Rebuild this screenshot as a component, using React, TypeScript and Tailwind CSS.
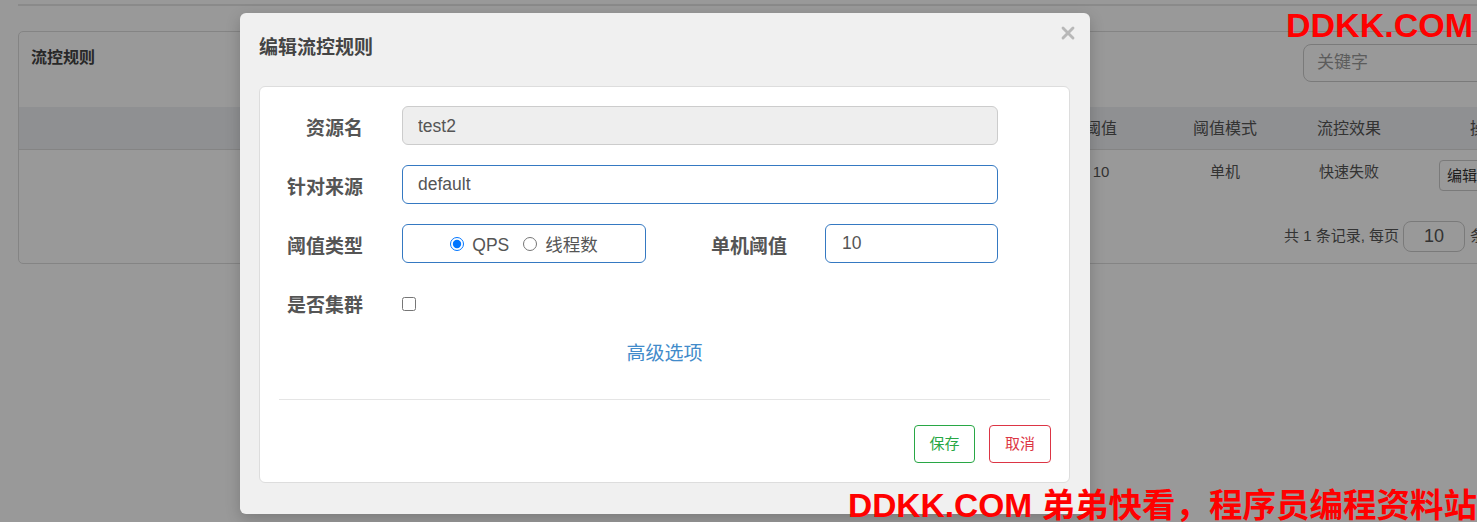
import { X } from 'lucide-react';

const font = "font-['Liberation_Sans','Noto_Sans_CJK_SC',sans-serif]";

function FormLabel({ text, className = '' }: { text: string; className?: string }) {
    return (
        <label className={`mt-[6px] text-right text-[19px] font-bold text-[#555] leading-[39px] ${className}`}>
            {text}
        </label>
    );
}

export default function App() {
    return (
        <div className={`relative h-[522px] w-[1477px] overflow-hidden bg-white ${font}`}>
            {/* page behind the dialog */}
            <div className="pl-[18px] pt-[4px]">
                <div className="h-[2px] w-[1540px] bg-[#e6e6e6]" />
                <div className="mt-[25px] w-[1544px] rounded-[5px] border border-[#dddddd]">
                    <div className="flex h-[75px] items-start">
                        <h3 className="pl-[12px] pt-[15px] text-[16px] font-bold leading-[22px] text-[#444]">流控规则</h3>
                        <input
                            className="ml-auto mr-[18px] mt-[12px] h-[38px] w-[240px] rounded-[8px] border border-[#cccccc] px-[13px] text-[17px] text-[#555] placeholder:text-[#999] outline-none"
                            placeholder="关键字"
                        />
                    </div>

                    <div className="grid h-[43px] grid-cols-[520px_170px_165px_165px_124px_124px_124px_1fr] items-center border-b border-[#dddddd] bg-[#eef0f3] pt-[2px] text-center text-[16px] text-[#555]">
                        <span>资源名</span>
                        <span>来源应用</span>
                        <span>流控模式</span>
                        <span>阈值类型</span>
                        <span>阈值</span>
                        <span>阈值模式</span>
                        <span>流控效果</span>
                        <span>操作</span>
                    </div>

                    <div className="grid h-[56px] grid-cols-[520px_170px_165px_165px_124px_124px_124px_1fr] items-start pt-[10px] text-center text-[15px] leading-[22px] text-[#555]">
                        <span className="pt-[1px]">test2</span>
                        <span className="pt-[1px]">default</span>
                        <span className="pt-[1px]">直接</span>
                        <span className="pt-[1px]">QPS</span>
                        <span className="pt-[1px]">10</span>
                        <span className="pt-[1px]">单机</span>
                        <span className="pt-[1px]">快速失败</span>
                        <div className="flex justify-center gap-[2px]">
                            <button className="h-[31px] rounded-[4px] border border-[#cccccc] px-[7px] text-[15px] text-[#333]">编辑</button>
                            <button className="h-[31px] rounded-[4px] border border-[#cccccc] px-[7px] text-[15px] text-[#333]">删除</button>
                        </div>
                    </div>

                    <div className="flex items-center justify-end pb-[11px] pr-[46px] pt-[15px] text-[15px] text-[#555]">
                        <span>共 1 条记录, 每页</span>
                        <input
                            className="ml-[4px] mr-[5px] h-[31px] w-[62px] rounded-[8px] border border-[#cccccc] text-center text-[18px] text-[#555] outline-none"
                            defaultValue="10"
                        />
                        <span>条记录</span>
                    </div>
                </div>
            </div>

            {/* backdrop */}
            <div className="absolute inset-0 bg-black/40" />

            {/* dialog */}
            <div className="absolute left-[240px] top-[13px] w-[850px] rounded-[6px] bg-[#f0f0f0] pb-[31px] shadow-[0_5px_15px_rgba(0,0,0,0.2)]">
                <div className="relative h-[73px] px-[19px] pt-[21px]">
                    <h4 className="text-[19px] font-bold leading-[28px] text-[#444]">编辑流控规则</h4>
                    <button className="absolute right-[12px] top-[10px] text-[#b8b8b8]">
                        <X size={20} strokeWidth={3.4} />
                    </button>
                </div>

                <div className="mx-[19px] w-[811px] rounded-[6px] border border-[#dddddd] bg-white pb-[19px] pt-[19px]">
                    <div className="mb-[20px] flex h-[39px] items-center gap-[39px]">
                        <FormLabel text="资源名" className="w-[103px]" />
                        <input
                            className="h-[39px] w-[596px] rounded-[6px] border border-[#cccccc] bg-[#eeeeee] px-[15px] pt-[1px] text-[17.5px] text-[#555] outline-none"
                            defaultValue="test2"
                            disabled
                        />
                    </div>

                    <div className="mb-[20px] flex h-[39px] items-center gap-[39px]">
                        <FormLabel text="针对来源" className="w-[103px]" />
                        <input
                            className="h-[39px] w-[596px] rounded-[6px] border border-[#3579c2] px-[15px] text-[17.5px] text-[#555] outline-none"
                            defaultValue="default"
                        />
                    </div>

                    <div className="mb-[20px] flex h-[39px] items-center">
                        <FormLabel text="阈值类型" className="w-[103px]" />
                        <div className="ml-[39px] flex h-[39px] w-[244px] items-center justify-center gap-[14px] rounded-[6px] border border-[#3579c2] text-[17.5px] text-[#555]">
                            <label className="flex items-center gap-[8px]">
                                <input type="radio" name="grade" defaultChecked className="m-0 h-[14px] w-[14px]" />
                                <span className="pt-[4px]">QPS</span>
                            </label>
                            <label className="flex items-center gap-[8px]">
                                <input type="radio" name="grade" className="m-0 h-[14px] w-[14px]" />
                                <span className="pt-[4px]">线程数</span>
                            </label>
                        </div>
                        <FormLabel text="单机阈值" className="w-[141px]" />
                        <input
                            className="ml-[38px] h-[39px] w-[173px] rounded-[6px] border border-[#3579c2] px-[16px] text-[17.5px] text-[#555] outline-none"
                            defaultValue="10"
                        />
                    </div>

                    <div className="mb-[20px] flex h-[39px] items-center gap-[39px]">
                        <FormLabel text="是否集群" className="w-[103px]" />
                        <input type="checkbox" className="m-0 mt-[2px] h-[14px] w-[14px]" />
                    </div>

                    <div className="h-[20px] pt-[2px] text-center text-[19px] leading-[20px] text-[#428bca]">
                        <a>高级选项</a>
                    </div>

                    <div className="mx-[19px] mt-[37px] h-px bg-[#e5e5e5]" />

                    <div className="mr-[18px] mt-[25px] flex justify-end gap-[14px]">
                        <button className="h-[38px] w-[61px] rounded-[4px] border border-[#28a745] bg-white text-[15px] text-[#28a745]">保存</button>
                        <button className="h-[38px] w-[62px] rounded-[4px] border border-[#dc3545] bg-white text-[15px] text-[#dc3545]">取消</button>
                    </div>
                </div>
            </div>

            {/* watermarks */}
            <div className="absolute right-[4px] top-[8px] text-[34px] font-bold leading-none text-[#ff0000]">DDKK.COM</div>
            <div className="absolute right-0 top-[489px] text-[33.5px] font-bold leading-none text-[#ff0000]">
                DDKK.COM 弟弟快看，程序员编程资料站
            </div>
        </div>
    );
}
